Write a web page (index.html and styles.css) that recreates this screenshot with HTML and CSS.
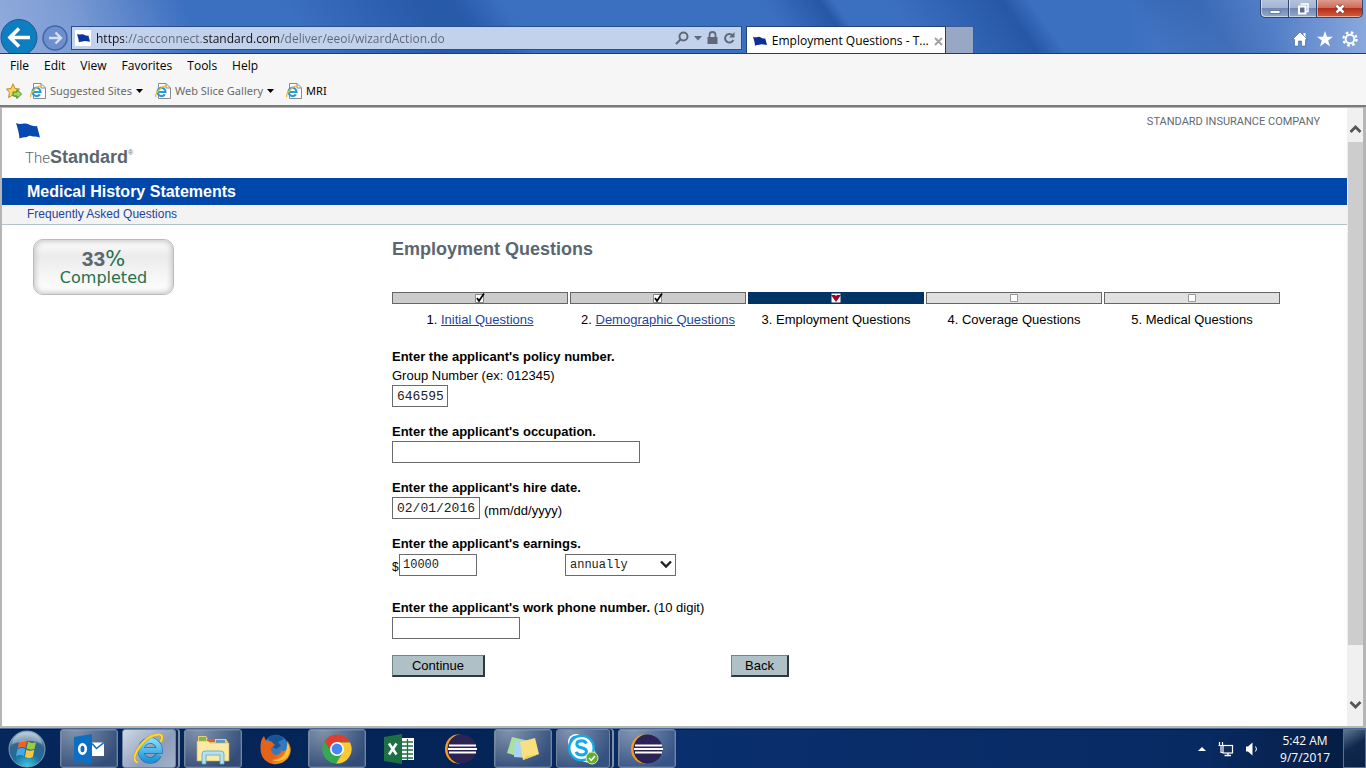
FILE: index.html
```html
<!DOCTYPE html>
<html lang="en">
<head>
<meta charset="utf-8">
<title>Employment Questions - The Standard</title>
<link rel="stylesheet" href="styles.css">
</head>
<body>
<svg class="defs" aria-hidden="true">
  <defs>
    <linearGradient id="ieBlue" x1="0" y1="0" x2="0" y2="1"><stop offset="0" stop-color="#7fdcfa"/><stop offset="1" stop-color="#1f93d8"/></linearGradient>
    <linearGradient id="foxOrange" x1="0" y1="0" x2="1" y2="1"><stop offset="0" stop-color="#e0651c"/><stop offset=".6" stop-color="#e6621a"/><stop offset="1" stop-color="#ffc02e"/></linearGradient>
    <radialGradient id="orb" cx=".5" cy="1" r="1"><stop offset="0" stop-color="#3fd0e8"/><stop offset=".4" stop-color="#1c6f9e"/><stop offset=".7" stop-color="#33648c"/><stop offset="1" stop-color="#b5cadb"/></radialGradient>
    <symbol id="flag" viewBox="0 0 24 17"><path d="M0 1Q3 2.500 8 1.500Q12 1 14 3Q17 4.500 21 4L24 15.500Q20 14 17 14.500Q13 13 11 15Q6 15 3.500 16.500Q3 10 0 1Z"/></symbol>
    <symbol id="iePage" viewBox="0 0 16 16"><path d="M3.500 .5H11L15.500 5V15.500H3.500Z" fill="#fff" stroke="#8b8b8b"/><path d="M11 .5V5H15.500" fill="none" stroke="#8b8b8b"/><path d="M2.500 9H10.500A4 4.200 0 1 0 9.800 11.300" fill="none" stroke="#2b9ada" stroke-width="2.200"/><path d="M1 14Q-.5 12 4 7Q9 2 12 3" fill="none" stroke="#eebb2c" stroke-width="1.300"/></symbol>
    <symbol id="eclipse" viewBox="0 0 32 30"><ellipse cx="13" cy="15" rx="13" ry="14.500" fill="#f59a23"/><ellipse cx="16" cy="15" rx="13.500" ry="14.500" fill="#1c2450"/><ellipse cx="17.500" cy="15" rx="14" ry="14" fill="#2c2255"/><path d="M4 11.500H31M3 15H32M4 18.500H31" stroke="#fff" stroke-width="1.800"/></symbol>
  </defs>
</svg>

<header class="chrome">
  <div class="window-controls">
    <button class="win-btn" aria-label="Minimize"><svg width="12" height="12" viewBox="0 0 12 12"><path d="M1 7.500H11V10.500H1Z" fill="#fff" stroke="#4b5d78" stroke-width=".7"/></svg></button>
    <button class="win-btn" aria-label="Restore"><svg width="12" height="12" viewBox="0 0 12 12"><path d="M3.500 1H11V8.500H9" fill="none" stroke="#fff" stroke-width="1.500"/><rect x="2" y="3.500" width="6.500" height="7" fill="#5b6f92" stroke="#fff" stroke-width="2"/></svg></button>
    <button class="win-btn win-close" aria-label="Close"><svg width="12" height="12" viewBox="0 0 12 12"><path d="M2.500 2.500L9.500 9.500M9.500 2.500L2.500 9.500" stroke="#70332f" stroke-width="4"/><path d="M2.500 2.500L9.500 9.500M9.500 2.500L2.500 9.500" stroke="#fff" stroke-width="2.500"/></svg></button>
  </div>
  <div class="nav-row">
    <button class="back" aria-label="Back"><svg width="38" height="36" viewBox="0 0 38 36"><circle cx="19" cy="19.500" r="18" fill="#0d7fc0" stroke="#2a548f"/><path d="M10 19.500H30M19 10.500L10 19.500L19 28.500" fill="none" stroke="#fff" stroke-width="3.600"/></svg></button>
    <button class="forward" aria-label="Forward"><svg width="26" height="28" viewBox="0 0 26 28"><circle cx="13" cy="14" r="12" fill="#6e8fcd" stroke="#3f66a9" stroke-width="1.500"/><path d="M7 14H19M13.500 8.500L19 14L13.500 19.500" fill="none" stroke="#d4e0f4" stroke-width="2.400"/></svg></button>
    <div class="address">
      <span class="favicon"><svg width="13" height="10" fill="#0b36a0"><use href="#flag"/></svg></span>
      <input class="url" type="text" aria-label="Address" value="https://accconnect.standard.com/deliver/eeoi/wizardAction.do">
      <button class="plain" aria-label="Search"><svg width="14" height="14" viewBox="0 0 14 14" fill="none" stroke="#5f6876" stroke-width="2"><circle cx="8.500" cy="5.500" r="4"/><path d="M5.500 8.500L1 13"/></svg></button>
      <button class="plain" aria-label="Address history"><svg width="8" height="5" viewBox="0 0 8 5"><path d="M0 0H8L4 4.500Z" fill="#5f6876"/></svg></button>
      <button class="plain" aria-label="Security report"><svg width="11" height="14" viewBox="0 0 11 14"><rect x=".5" y="6" width="10" height="7" fill="#5f6876"/><path d="M2.500 7V4A3 3 0 0 1 8.500 4V7" fill="none" stroke="#5f6876" stroke-width="1.800"/></svg></button>
      <button class="plain" aria-label="Refresh"><svg width="13" height="14" viewBox="0 0 13 14"><path d="M9.500 4.300A4.300 4.300 0 1 0 10.300 9" fill="none" stroke="#5f6876" stroke-width="2"/><path d="M11.500 1V6.500H6Z" fill="#5f6876"/></svg></button>
    </div>
    <div class="tabs">
      <div class="tab">
        <svg width="14" height="10" fill="#0b2f96"><use href="#flag"/></svg>
        <span class="tab-title">Employment Questions - T...</span>
        <button class="plain" aria-label="Close tab"><svg width="9" height="9" viewBox="0 0 9 9"><path d="M1 1L8 8M8 1L1 8" stroke="#a3a3a3" stroke-width="2"/></svg></button>
      </div>
      <button class="new-tab" aria-label="New tab"></button>
      <div class="tools">
        <button class="plain" aria-label="Home"><svg width="16" height="16" viewBox="0 0 16 16"><path d="M8 1L15.500 8.500H13.500V15H9.500V10H6.500V15H2.500V8.500H.5Z" fill="#fff" stroke="#3a5e94" stroke-width=".6"/><path d="M11.500 2H13.500V6.500L11.500 4Z" fill="#fff"/></svg></button>
        <button class="plain" aria-label="Favorites"><svg width="16" height="16" viewBox="0 0 16 16"><path d="M8 0L10 5.800H16L11.200 9.400L13 15.500L8 11.700L3 15.500L4.800 9.400L0 5.800H6Z" fill="#fff"/></svg></button>
        <button class="plain" aria-label="Tools"><svg width="16" height="16" viewBox="0 0 16 16" fill="none" stroke="#fff"><circle cx="8" cy="8" r="6.500" stroke-width="2.400" stroke-dasharray="2.600 2.505"/><circle cx="8" cy="8" r="4.300" stroke-width="1.900"/></svg></button>
      </div>
    </div>
  </div>
</header>

<nav class="menu-bar" aria-label="Menu">
  <button class="menu">File</button><button class="menu">Edit</button><button class="menu">View</button><button class="menu">Favorites</button><button class="menu">Tools</button><button class="menu">Help</button>
</nav>
<nav class="fav-bar" aria-label="Favorites">
  <button class="plain" aria-label="Add to favorites"><svg width="16" height="16" viewBox="0 0 16 16"><path d="M7 .8L9 5.500L13.500 6L10 9.500L11 14.500L7 12L2.500 14.500L3.500 9.500L.5 6L5 5.500Z" fill="#fbd45c" stroke="#c58b20"/><path d="M7 9H11V6.500L15.500 11L11 15.500V13H7Z" fill="#9bdc5f" stroke="#3c8b28"/></svg></button>
  <div class="fav-list">
    <a class="fav" href="#"><svg width="16" height="16"><use href="#iePage"/></svg><span>Suggested Sites</span><svg width="7" height="4" viewBox="0 0 7 4"><path d="M0 0H7L3.500 4Z"/></svg></a>
    <a class="fav" href="#"><svg width="16" height="16"><use href="#iePage"/></svg><span>Web Slice Gallery</span><svg width="7" height="4" viewBox="0 0 7 4"><path d="M0 0H7L3.500 4Z"/></svg></a>
    <a class="fav fav-dark" href="#"><svg width="16" height="16"><use href="#iePage"/></svg><span>MRI</span></a>
  </div>
</nav>

<div class="viewport">
  <div class="page">
    <header class="site-header">
      <a class="logo" href="#" aria-label="The Standard">
        <svg width="24" height="17" fill="#0749ae"><use href="#flag"/></svg>
        <span class="wordmark"><span class="the">The</span><b>Standard</b><sup>®</sup></span>
      </a>
      <span class="company">STANDARD INSURANCE COMPANY</span>
    </header>
    <div class="title-bar">Medical History Statements</div>
    <div class="faq-bar"><a href="#">Frequently Asked Questions</a></div>
    <div class="columns">
      <aside class="side">
        <div class="badge"><div class="percent"><b>33</b>%</div><div class="completed">Completed</div></div>
      </aside>
      <main class="main">
        <h1>Employment Questions</h1>
        <ol class="steps">
          <li><div class="bar done"><svg width="10" height="10" viewBox="0 0 10 10"><path d="M.5 1.500H8.500V9.500H.5Z" fill="#fff" stroke="#888"/><path d="M2 5L4 8L9 .5" fill="none" stroke="#000" stroke-width="1.800"/></svg></div><span>1. <a href="#">Initial Questions</a></span></li>
          <li><div class="bar done"><svg width="10" height="10" viewBox="0 0 10 10"><path d="M.5 1.500H8.500V9.500H.5Z" fill="#fff" stroke="#888"/><path d="M2 5L4 8L9 .5" fill="none" stroke="#000" stroke-width="1.800"/></svg></div><span>2. <a href="#">Demographic Questions</a></span></li>
          <li><div class="bar current"><svg width="10" height="10" viewBox="0 0 10 10"><path d="M.5 .5H9.500V9.500H.5Z" fill="#fff"/><path d="M0 2H4L5 3L6 2H10L5 9Z" fill="#a0002c"/></svg></div><span>3. Employment Questions</span></li>
          <li><div class="bar"><svg width="8" height="8" viewBox="0 0 8 8"><path d="M.5 .5H7.500V7.500H.5Z" fill="#fff" stroke="#999"/></svg></div><span>4. Coverage Questions</span></li>
          <li><div class="bar"><svg width="8" height="8" viewBox="0 0 8 8"><path d="M.5 .5H7.500V7.500H.5Z" fill="#fff" stroke="#999"/></svg></div><span>5. Medical Questions</span></li>
        </ol>
        <form class="form">
          <div class="field">
            <label for="policy"><b>Enter the applicant's policy number.</b><br>Group Number (ex: 012345)</label>
            <div class="row"><input class="box w-policy" id="policy" value="646595"></div>
          </div>
          <div class="field">
            <label for="occupation"><b>Enter the applicant's occupation.</b></label>
            <div class="row"><input class="box w-occupation" id="occupation"></div>
          </div>
          <div class="field">
            <label for="hire"><b>Enter the applicant's hire date.</b></label>
            <div class="row"><input class="box w-date" id="hire" value="02/01/2016"><span class="hint">(mm/dd/yyyy)</span></div>
          </div>
          <div class="field earnings">
            <label for="earnings"><b>Enter the applicant's earnings.</b></label>
            <div class="row"><span class="dollar">$</span><input class="box w-earnings" id="earnings" value="10000">
              <select class="box period" aria-label="Earnings period"><option>annually</option></select></div>
          </div>
          <div class="field">
            <label for="phone"><b>Enter the applicant's work phone number.</b> (10 digit)</label>
            <div class="row"><input class="box w-phone" id="phone"></div>
          </div>
          <div class="actions"><button type="button" class="btn btn-continue">Continue</button><button type="button" class="btn btn-back">Back</button></div>
        </form>
      </main>
    </div>
  </div>
  <div class="scrollbar" aria-hidden="true">
    <svg width="13" height="10" viewBox="0 0 13 10"><path d="M1.500 8L6.500 3L11.500 8" fill="none" stroke="#555" stroke-width="2.800"/></svg>
    <div class="thumb"></div>
    <svg width="13" height="10" viewBox="0 0 13 10"><path d="M1.500 2L6.500 7L11.500 2" fill="none" stroke="#555" stroke-width="2.800"/></svg>
  </div>
</div>

<footer class="taskbar">
  <button class="start" aria-label="Start"><svg width="38" height="38" viewBox="0 0 38 38"><circle cx="19" cy="19" r="18" fill="url(#orb)" stroke="#7f9ab5"/><path d="M11 12Q15 9 19 11L17.500 18Q14 16 9.500 18.500Z" fill="#e8622a"/><path d="M20 11.500Q24 14 28 12L26.500 19Q22.500 20.500 18.500 18.500Z" fill="#9ccb3c"/><path d="M9.300 19.500Q13.500 17 17.300 19L16 26Q12 24 8 26.500Z" fill="#46a6e6"/><path d="M18.300 19.700Q22 21.800 26.300 20L24.800 27Q20.500 29 17 26.700Z" fill="#fcc736"/><path d="M4 14Q6 3 19 2.500Q32 3 34 14Q24 8 4 14Z" fill="#fff" opacity=".3"/></svg></button>
  <div class="apps">
    <button class="app open" aria-label="Outlook"><svg width="30" height="30" viewBox="0 0 30 30"><path d="M0 3L18 0V30L0 27Z" fill="#0b6fc4"/><ellipse cx="8.500" cy="15" rx="3.300" ry="4.600" fill="none" stroke="#fff" stroke-width="2.600"/><path d="M18 8.500H30V22H18Z" fill="#fff"/><path d="M18 9.500L22.500 14.500L30 8.500" fill="none" stroke="#0b6fc4" stroke-width="1.600"/></svg></button>
    <button class="app open active stacked" aria-label="Internet Explorer"><svg width="30" height="32" viewBox="0 0 30 32"><path d="M7 17.500H25.500A9.300 10 0 1 0 24.500 22" fill="none" stroke="#1b6fb0" stroke-width="6.500"/><path d="M7 17.500H25.500A9.300 10 0 1 0 24.500 22" fill="none" stroke="url(#ieBlue)" stroke-width="5.200"/><path d="M4 29.500Q-3 28 4 16Q14 1 26 1.500Q30 3 26.500 9" fill="none" stroke="#c99a12" stroke-width="3"/><path d="M4 29.500Q-3 28 4 16Q14 1 26 1.500Q30 3 26.500 9" fill="none" stroke="#fbd63e" stroke-width="2"/></svg></button>
    <button class="app open" aria-label="Windows Explorer"><svg width="34" height="32" viewBox="0 0 34 32"><path d="M2 3H10L12 6H30L32 9V28H2Z" fill="#eccf73"/><path d="M3 4H10V8H3Z" fill="#74b95b"/><path d="M11 6H19V9H11Z" fill="#d56245"/><path d="M20 7H29V10H20Z" fill="#5c99c8"/><path d="M1 8H12L14 10H33V28H1Z" fill="#fbe9a6" stroke="#d0a94c" stroke-width=".6"/><path d="M6 31V21Q6 18 9 18H25Q28 18 28 21V31H24V22H10V31Z" fill="#b5e1f1" stroke="#5ba4c6" stroke-width=".8"/></svg></button>
    <button class="app" aria-label="Firefox"><svg width="31" height="32" viewBox="0 0 31 32"><circle cx="16" cy="14.500" r="12.500" fill="#3279bd"/><path d="M8 4Q17-2 24 6L18 9L21 13L16 16L10 12Z" fill="#185596"/><path d="M1 9Q2 5 4 3L6 8Q9 7 12 9L15 12L11 15Q11 22 17 22Q21 21 21 17Q25 20 28 15Q29 11 27 7Q34 17 28 25Q22 32 13 31Q3 29 1 20Q0 14 1 9Z" fill="url(#foxOrange)"/><path d="M27 8Q33 18 26 25Q19 30 12 27Q22 27 25 20Q28 14 27 8Z" fill="#ffc13a"/></svg></button>
    <button class="app open" aria-label="Chrome"><svg width="30" height="30" viewBox="0 0 30 30"><circle cx="15" cy="15" r="14.500" fill="#35a853"/><path d="M15 15L2.500 7.500A14.500 14.500 0 0 1 28 8.500H15Z" fill="#e33b2e"/><path d="M15 8.500H28A14.500 14.500 0 0 1 14 29.500L21 18Z" fill="#fcc934"/><path d="M2.500 7.500L9.500 19L15 15Z" fill="#e33b2e"/><path d="M.5 15A14.500 14.500 0 0 0 14 29.500L20.500 18.500L9.500 18.500L2.500 7.500Q.5 11 .5 15Z" fill="#35a853"/><circle cx="15" cy="15" r="7" fill="#fff"/><circle cx="15" cy="15" r="5.400" fill="#4386f5"/></svg></button>
    <button class="app" aria-label="Excel"><svg width="30" height="30" viewBox="0 0 30 30"><path d="M17 4H30V26H17Z" fill="#fff"/><path d="M18 8H29M18 12H29M18 16H29M18 20H29M18 24H29M23.500 5V26" stroke="#1d7044" stroke-width="1.300"/><path d="M0 3L18 0V30L0 27Z" fill="#1d7044"/><path d="M5 9.500L12.500 20.500M12.500 9.500L5 20.500" stroke="#fff" stroke-width="2.600"/></svg></button>
    <button class="app" aria-label="Eclipse"><svg width="32" height="30"><use href="#eclipse"/></svg></button>
    <button class="app open" aria-label="Sticky Notes"><svg width="34" height="28" viewBox="0 0 34 28"><path d="M6 2L19 5L14 22L1 18Z" fill="#a9dfa0"/><path d="M9 6L22 5L21 23L8 22Z" fill="#abd4f2"/><path d="M14 7L29 3L33 19L17 25Z" fill="#f8e07e"/><path d="M17 25L20 21L33 19Z" fill="#f2d05d"/></svg></button>
    <button class="app open stacked" aria-label="Skype"><svg width="32" height="32" viewBox="0 0 32 32"><circle cx="9" cy="9" r="8" fill="#fff"/><circle cx="20" cy="21" r="8.500" fill="#fff"/><circle cx="14.500" cy="15" r="13.500" fill="#14a8e6"/><circle cx="9" cy="9" r="6.500" fill="#14a8e6"/><circle cx="14.500" cy="15" r="11" fill="#fff"/><path d="M19.500 10.500Q18 7.800 14.500 7.800Q9.800 8 9.800 11.200Q10 14 14.500 14.800Q19.500 15.800 19.500 18.800Q19 22 14.500 22Q10.500 22 9 18.800" fill="none" stroke="#14a8e6" stroke-width="3"/><circle cx="25" cy="25" r="6" fill="#62ad2b" stroke="#d6edc4"/><path d="M22 25L24.300 27.300L28 23" fill="none" stroke="#fff" stroke-width="1.600"/></svg></button>
    <button class="app open" aria-label="Eclipse workspace"><svg width="32" height="30"><use href="#eclipse"/></svg></button>
  </div>
  <div class="tray">
    <button class="plain" aria-label="Show hidden icons"><svg width="8" height="4" viewBox="0 0 8 4"><path d="M0 4L4 0L8 4Z" fill="#fff"/></svg></button>
    <button class="plain" aria-label="Network"><svg width="16" height="16" viewBox="0 0 16 16" fill="none" stroke="#fff"><rect x="5" y="4.500" width="9.500" height="7.500" fill="#152c50" stroke-width="1.200"/><path d="M10 12V14M6.500 14.500H13" stroke-width="1.400"/><path d="M1.500 1V4M4.500 1V4M.5 4.500H5.500M3 5V11.500H5" stroke-width="1.200"/></svg></button>
    <button class="plain" aria-label="Volume"><svg width="13" height="14" viewBox="0 0 13 14"><path d="M0 4.500H2L6.500 .5V13.500L2 9.500H0Z" fill="#fff"/><path d="M9.500 4.500Q11.500 7 9.500 9.500" fill="none" stroke="#fff"/></svg></button>
    <time class="clock">5:42 AM<br>9/7/2017</time>
    <button class="show-desktop" aria-label="Show desktop"></button>
  </div>
</footer>
</body>
</html>
```

FILE: styles.css
```css
* { box-sizing: border-box; }
html, body { height: 100%; }
body {
  margin: 0;
  display: flex;
  flex-direction: column;
  font-family: "Liberation Sans", Arial, sans-serif;
  font-size: 13px;
  color: #000;
  background: #fff;
}
button { font: inherit; }
svg { display: block; flex: none; }
.defs { position: absolute; width: 0; height: 0; }
.plain { border: 0; padding: 0; background: none; }

/* Browser frame */
.chrome {
  flex: none;
  height: 54px;
  border-bottom: 1px solid #1c3c78;
  background:
    linear-gradient(70deg, rgba(146,172,220,1) 0, rgba(130,160,214,.9) 80px, rgba(130,160,214,0) 190px),
    linear-gradient(55deg, transparent 260px, rgba(28,76,156,.6) 370px, rgba(28,76,156,.6) 400px, transparent 440px),
    linear-gradient(270deg, rgba(146,174,224,.9) 0, rgba(110,146,208,.5) 90px, transparent 240px),
    linear-gradient(55deg, transparent 57%, rgba(24,72,150,.6) 61%, transparent 62%, transparent 66%, rgba(24,72,150,.6) 74%, transparent 76%, transparent 83%, rgba(24,72,150,.5) 88%, transparent 93%),
    #3b6fc0;
}
.window-controls {
  display: flex;
  justify-content: flex-end;
  height: 18px;
  padding-right: 3px;
}
.win-btn {
  display: flex;
  align-items: center;
  justify-content: center;
  width: 28px;
  padding: 0;
  border: 1px solid #33466b;
  border-top: 0;
  border-right: 0;
  box-shadow: inset 1px -1px 0 rgba(255,255,255,.5);
  background: linear-gradient(#b4c3dc 0, #a3b5d3 45%, #7088b3 50%, #93a9cd 100%);
}
.win-btn:first-child { border-bottom-left-radius: 5px; }
.win-close {
  width: 47px;
  border-right: 1px solid #33466b;
  border-bottom-right-radius: 5px;
  background: linear-gradient(#dc9b8d 0, #cf6c57 45%, #b52d18 50%, #cf5f42 100%);
}
.nav-row { display: flex; height: 35px; }
.back { flex: none; width: 38px; height: 35px; margin-right: 4px; padding: 0; border: 0; background: none; overflow: hidden; }
.forward { flex: none; width: 26px; margin: 6px 3px 0 0; padding: 0; border: 0; background: none; align-self: flex-start; }
.address {
  flex: 666 1 0;
  display: flex;
  align-items: center;
  gap: 5px;
  height: 24px;
  margin: 8px 4px 0 0;
  padding: 0 5px 0 3px;
  border: 1px solid #2b4f8c;
  background: #c3d2ec;
  min-width: 0;
}
.favicon { display: flex; align-items: center; justify-content: center; flex: none; width: 16px; height: 16px; background: #fff; }
.url {
  flex: 1;
  min-width: 0;
  padding: 2px 0 0;
  border: 0;
  outline: 0;
  font: 12px/20px "Open Sans", "Noto Sans", sans-serif;
  color: #5b6575;
  /* scheme and host are darker than the rest of the address */
  background: linear-gradient(90deg, #111 28px, #5b6575 28px 107px, #111 107px 184px, #5b6575 184px) text;
  -webkit-text-fill-color: transparent;
}
.tabs { flex: 625 1 0; display: flex; align-items: stretch; min-width: 0; padding-top: 8px; }
.tab {
  display: flex;
  align-items: center;
  gap: 5px;
  width: 200px;
  padding: 2px 6px 0 6px;
  border: 1px solid #24427a;
  border-bottom: 0;
  background: #fff;
  font: 12px/20px "Open Sans", "Noto Sans", sans-serif;
  white-space: nowrap;
}
.tab-title { flex: 1; }
.new-tab { width: 28px; padding: 0; border: 1px solid #3c5c96; border-left: 0; border-bottom: 0; background: #98a7c3; }
.tools { display: flex; align-items: center; gap: 9px; margin-left: auto; padding: 0 8px 2px 0; }

.menu-bar {
  flex: none;
  display: flex;
  align-items: center;
  gap: 15px;
  height: 24px;
  padding-left: 10px;
  background: #f6f6f6;
  font: 12px/20px "Open Sans", "Noto Sans", sans-serif;
}
.menu { padding: 0; border: 0; background: none; }
.fav-bar {
  flex: none;
  display: flex;
  align-items: center;
  height: 29px;
  gap: 8px;
  padding: 0 0 2px 6px;
  border-bottom: 2px solid #7b7b7b;
  background: #f6f6f6;
  font: 11px/20px "Noto Sans", "Open Sans", sans-serif;
}
.fav-list { display: flex; gap: 12px; }
.fav { display: flex; align-items: center; gap: 4px; color: #6a6a6a; text-decoration: none; }
.fav-dark { color: #000; }

/* Page viewport */
.viewport {
  flex: 1;
  display: flex;
  min-height: 0;
  border: 2px solid #b5b5b5;
  border-width: 1px 3px 2px 2px;
}
.page { flex: 1; min-width: 0; overflow: auto; }
.scrollbar {
  flex: none;
  display: flex;
  flex-direction: column;
  align-items: center;
  width: 16px;
  padding: 16px 0;
  background: #f0f0f0;
}
.thumb { flex: 0 1 503px; width: 15px; margin: 8px 0 auto; background: #cdcdcd; }

.site-header { display: flex; justify-content: space-between; height: 70px; padding: 0 27px 0 14px; }
.logo { display: block; padding-top: 14px; color: #5b666f; text-decoration: none; }
.wordmark { display: flex; align-items: baseline; margin: 8px 0 0 9px; font-size: 18px; line-height: 20px; }
.wordmark sup { align-self: flex-start; font-size: 7px; line-height: 12px; }
.the { font: 300 15px/20px Roboto, sans-serif; }
.company { padding-top: 6px; font: 11px/15px Roboto, sans-serif; color: #5f6a75; }
.title-bar { padding: 0 25px; font-size: 16px; line-height: 27px; font-weight: bold; color: #fff; background: #0047ab; }
.faq-bar { padding: 0 25px; border-bottom: 1px solid #b3c4c8; font-size: 12px; line-height: 19px; background: #f3f3f3; }
.faq-bar a { color: #1f449c; text-decoration: none; }

.columns { display: flex; padding-top: 14px; }
.side { flex: none; width: 390px; padding-left: 31px; }
.badge {
  width: 141px;
  height: 56px;
  padding-top: 8px;
  border: 1px solid #bbb;
  border-radius: 10px;
  background: linear-gradient(#fff 0, #ebebeb 30%, #f4f4f4 60%, #fff 100%);
  box-shadow: inset 0 0 5px 2px #ccc;
  text-align: center;
  color: #24704c;
}
.percent { font: 21px/22px "DejaVu Sans", Verdana, sans-serif; }
.percent b { font-family: "Liberation Sans", Arial, sans-serif; color: #5b666f; }
.completed { font: 16px/16px "DejaVu Sans", Verdana, sans-serif; }

.main { flex: 1; min-width: 0; max-width: 888px; }
h1 { margin: 0 0 33px; font-size: 18px; line-height: 20px; color: #5b666f; }
.steps { display: grid; grid-template-columns: repeat(5, 1fr); gap: 2px; margin: 0 0 17px; padding: 0; list-style: none; text-align: center; line-height: 20px; }
.steps a { color: #1f449c; }
.bar { display: flex; align-items: center; justify-content: center; height: 12px; margin-bottom: 6px; border: 1px solid #666; background: #e0e0e0; }
.done { background: #ccc; }
.current { background: #036; border-color: #036; }

.form { line-height: 19px; }
.field { margin-bottom: 15px; }
.field label { display: block; }
.row { display: flex; align-items: center; height: 22px; }
.box {
  height: 22px;
  padding: 0 4px;
  border: 1px solid #6b6b6b;
  border-radius: 0;
  background: #fff;
  color: #222;
  font: 13px/18px "Liberation Mono", "Courier New", monospace;
}
.w-policy { width: 56px; }
.w-occupation { width: 248px; }
.w-date { width: 88px; }
.w-earnings { width: 78px; padding: 0 3px; }
.w-phone { width: 128px; }
.hint { margin-left: 4px; padding-top: 5px; }
.earnings { margin-bottom: 22px; }
.earnings .row { height: 23px; }
.earnings .box { font-size: 12px; }
.dollar { width: 7px; padding-top: 6px; font-size: 12px; }
.period {
  appearance: none;
  width: 111px;
  margin-left: 88px;
  background: #fff url("data:image/svg+xml,%3Csvg xmlns='http://www.w3.org/2000/svg' width='12' height='9'%3E%3Cpath d='M1 1.500L6 6.500L11 1.500' fill='none' stroke='%23222' stroke-width='2.400'/%3E%3C/svg%3E") no-repeat right 3px center;
}
.actions { display: flex; justify-content: space-between; width: 397px; max-width: 100%; margin-top: 16px; }
.btn { height: 22px; padding: 0; border: solid; border-width: 1px 2px 2px 1px; border-color: #6f868a #2b3a3d #2b3a3d #6f868a; background: #afc0c6; }
.btn-continue { width: 93px; }
.btn-back { width: 58px; }

/* Taskbar */
.taskbar {
  flex: none;
  display: flex;
  height: 40px;
  border-top: 1px solid #4a6a96;
  background: linear-gradient(90deg, #06275b 0, #042457 35%, #0a2f6d 50%, #082a63 88%, #051b3e 100%);
  box-shadow: inset 0 1px 0 #0a1a38;
}
.start { flex: none; width: 60px; padding: 0 0 0 8px; border: 0; background: none; }
.apps { display: flex; gap: 4px; padding: 0; }
.app { display: flex; align-items: center; justify-content: center; width: 58px; padding: 0; border: 1px solid transparent; border-radius: 3px; background: none; }
.open {
  border-color: #74869f;
  background: radial-gradient(ellipse at 25% 0, rgba(255,255,255,.5), rgba(255,255,255,.18) 80%);
  box-shadow: inset 0 0 0 1px rgba(255,255,255,.1);
}
.active { background: linear-gradient(135deg, #d0d8e4, #8d9dba 60%, #a2b2cb); }
.stacked { width: 54px; margin-right: 4px; box-shadow: 2px 0 0 #14294f, 4px 0 0 #7f90ad; }
.tray { display: flex; align-items: center; gap: 12px; margin-left: auto; }
.clock { margin-left: 9px; margin-right: 1px; text-align: center; color: #fff; font: 12px/17px "Open Sans", "Noto Sans", sans-serif; }
.show-desktop { align-self: stretch; width: 23px; margin-left: -12px; padding: 0; border: 1px solid #5a7090; background: linear-gradient(150deg, #5f7593, #10284e 45%, #0c2144); }
.clock { padding-right: 12px; }
```
